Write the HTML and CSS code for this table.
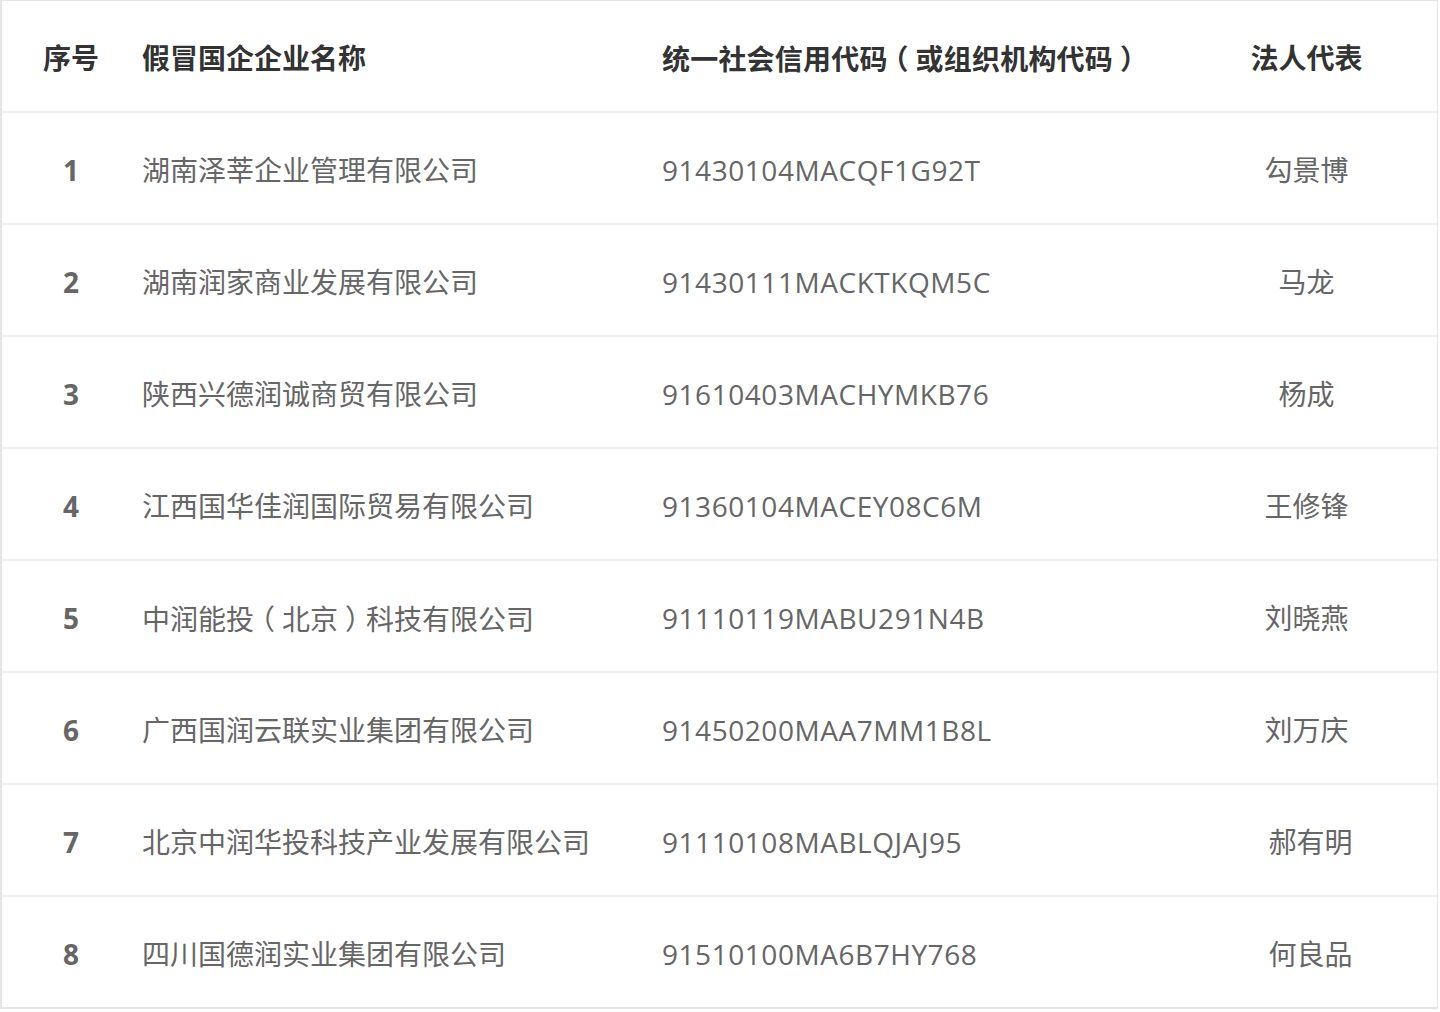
FILE: index.html
```html
<!DOCTYPE html>
<html lang="zh-CN">
<head>
<meta charset="utf-8">
<title>假冒国企企业名单</title>
<link rel="stylesheet" href="styles.css">
</head>
<body>
<div class="table">
  <div class="row head">
    <div class="cell idx">序号</div>
    <div class="cell name">假冒国企企业名称</div>
    <div class="cell code">统一社会信用代码<span class="pp">（</span>或组织机构代码<span class="pp">）</span></div>
    <div class="cell rep">法人代表</div>
  </div>
  <div class="row">
    <div class="cell idx">1</div>
    <div class="cell name">湖南泽莘企业管理有限公司</div>
    <div class="cell code">91430104MACQF1G92T</div>
    <div class="cell rep">勾景博</div>
  </div>
  <div class="row">
    <div class="cell idx">2</div>
    <div class="cell name">湖南润家商业发展有限公司</div>
    <div class="cell code">91430111MACKTKQM5C</div>
    <div class="cell rep">马龙</div>
  </div>
  <div class="row">
    <div class="cell idx">3</div>
    <div class="cell name">陕西兴德润诚商贸有限公司</div>
    <div class="cell code">91610403MACHYMKB76</div>
    <div class="cell rep">杨成</div>
  </div>
  <div class="row">
    <div class="cell idx">4</div>
    <div class="cell name">江西国华佳润国际贸易有限公司</div>
    <div class="cell code">91360104MACEY08C6M</div>
    <div class="cell rep">王修锋</div>
  </div>
  <div class="row">
    <div class="cell idx">5</div>
    <div class="cell name">中润能投<span class="pp">（</span>北京<span class="pp">）</span>科技有限公司</div>
    <div class="cell code">91110119MABU291N4B</div>
    <div class="cell rep">刘晓燕</div>
  </div>
  <div class="row">
    <div class="cell idx">6</div>
    <div class="cell name">广西国润云联实业集团有限公司</div>
    <div class="cell code">91450200MAA7MM1B8L</div>
    <div class="cell rep">刘万庆</div>
  </div>
  <div class="row">
    <div class="cell idx">7</div>
    <div class="cell name">北京中润华投科技产业发展有限公司</div>
    <div class="cell code">91110108MABLQJAJ95</div>
    <div class="cell rep shift">郝有明</div>
  </div>
  <div class="row last">
    <div class="cell idx">8</div>
    <div class="cell name">四川国德润实业集团有限公司</div>
    <div class="cell code">91510100MA6B7HY768</div>
    <div class="cell rep shift">何良品</div>
  </div>
</div>
</body>
</html>
```

FILE: styles.css
```css
html, body {
  margin: 0;
  padding: 0;
  background: #ffffff;
}

.table {
  width: 1438px;
  box-sizing: border-box;
  border: 1px solid #e3e6e8;
  border-left-width: 2px;
  border-bottom-width: 2px;
  font-family: "Open Sans", "Noto Sans CJK SC", sans-serif;
  font-size: 28px;
  color: #666666;
}

.row {
  display: grid;
  grid-template-columns: 138px 522px 512px 1fr;
  height: 112px;
  box-sizing: border-box;
  padding-top: 4px;
  border-bottom: 2px solid #efefef;
  align-items: center;
}

.row.last {
  border-bottom: none;
  height: 110px;
}

.head {
  font-weight: 700;
  color: #333333;
}

.cell {
  white-space: nowrap;
  line-height: 1;
}

.pp {
  display: inline-block;
  width: 28px;
  text-align: center;
  font-family: "Noto Sans CJK SC", sans-serif;
  font-feature-settings: "halt";
  letter-spacing: 0;
}

.idx {
  text-align: center;
  font-weight: 700;
}

.name {
  padding-left: 2px;
}

.code {
  letter-spacing: 0.55px;
}

.head .code {
  letter-spacing: 0.2px;
}

.rep {
  text-align: center;
  padding-left: 2px;
}

.rep.shift {
  padding-left: 10px;
}
```
